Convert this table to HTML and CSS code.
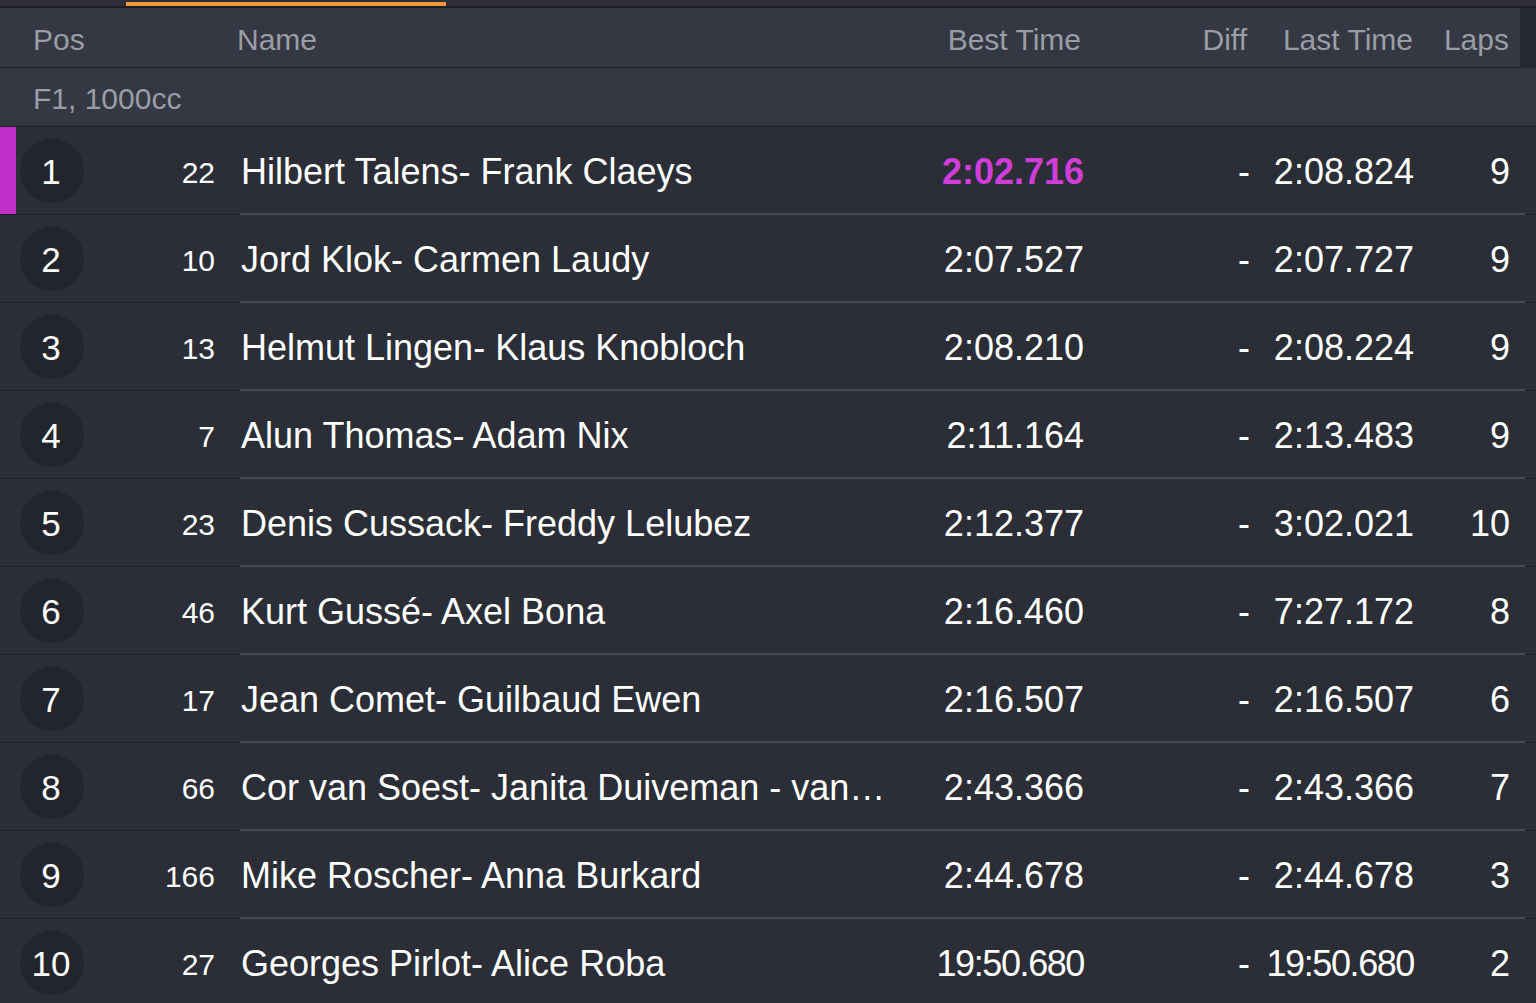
FILE: index.html
```html
<!DOCTYPE html>
<html>
<head>
<meta charset="utf-8">
<link rel="stylesheet" href="styles.css">
</head>
<body>
<div class="page">
  <div class="topbar"><div class="tab-ind"></div></div>
  <div class="head-wrap">
    <div class="head">
      <div class="h-lead">Pos</div>
      <div class="h-name">Name</div>
      <div class="h-best">Best Time</div>
      <div class="h-diff">Diff</div>
      <div class="h-last">Last Time</div>
      <div class="h-laps">Laps</div>
    </div>
    <div class="head-tail"></div>
  </div>
  <div class="group">F1, 1000cc</div>

  <div class="row leader">
    <div class="lead"><div class="stripe"></div><div class="pos">1</div><div class="num">22</div></div>
    <div class="main"><div class="name">Hilbert Talens- Frank Claeys</div><div class="best fastest">2:02.716</div><div class="diff">-</div><div class="last">2:08.824</div><div class="laps">9</div></div>
    <div class="tail"></div>
  </div>
  <div class="row">
    <div class="lead"><div class="stripe none"></div><div class="pos">2</div><div class="num">10</div></div>
    <div class="main"><div class="name">Jord Klok- Carmen Laudy</div><div class="best">2:07.527</div><div class="diff">-</div><div class="last">2:07.727</div><div class="laps">9</div></div>
    <div class="tail"></div>
  </div>
  <div class="row">
    <div class="lead"><div class="stripe none"></div><div class="pos">3</div><div class="num">13</div></div>
    <div class="main"><div class="name">Helmut Lingen- Klaus Knobloch</div><div class="best">2:08.210</div><div class="diff">-</div><div class="last">2:08.224</div><div class="laps">9</div></div>
    <div class="tail"></div>
  </div>
  <div class="row">
    <div class="lead"><div class="stripe none"></div><div class="pos">4</div><div class="num">7</div></div>
    <div class="main"><div class="name">Alun Thomas- Adam Nix</div><div class="best">2:11.164</div><div class="diff">-</div><div class="last">2:13.483</div><div class="laps">9</div></div>
    <div class="tail"></div>
  </div>
  <div class="row">
    <div class="lead"><div class="stripe none"></div><div class="pos">5</div><div class="num">23</div></div>
    <div class="main"><div class="name">Denis Cussack- Freddy Lelubez</div><div class="best">2:12.377</div><div class="diff">-</div><div class="last">3:02.021</div><div class="laps">10</div></div>
    <div class="tail"></div>
  </div>
  <div class="row">
    <div class="lead"><div class="stripe none"></div><div class="pos">6</div><div class="num">46</div></div>
    <div class="main"><div class="name">Kurt Gussé- Axel Bona</div><div class="best">2:16.460</div><div class="diff">-</div><div class="last">7:27.172</div><div class="laps">8</div></div>
    <div class="tail"></div>
  </div>
  <div class="row">
    <div class="lead"><div class="stripe none"></div><div class="pos">7</div><div class="num">17</div></div>
    <div class="main"><div class="name">Jean Comet- Guilbaud Ewen</div><div class="best">2:16.507</div><div class="diff">-</div><div class="last">2:16.507</div><div class="laps">6</div></div>
    <div class="tail"></div>
  </div>
  <div class="row">
    <div class="lead"><div class="stripe none"></div><div class="pos">8</div><div class="num">66</div></div>
    <div class="main"><div class="name">Cor van Soest- Janita Duiveman - van…</div><div class="best">2:43.366</div><div class="diff">-</div><div class="last">2:43.366</div><div class="laps">7</div></div>
    <div class="tail"></div>
  </div>
  <div class="row">
    <div class="lead"><div class="stripe none"></div><div class="pos">9</div><div class="num">166</div></div>
    <div class="main"><div class="name">Mike Roscher- Anna Burkard</div><div class="best">2:44.678</div><div class="diff">-</div><div class="last">2:44.678</div><div class="laps">3</div></div>
    <div class="tail"></div>
  </div>
  <div class="row">
    <div class="lead"><div class="stripe none"></div><div class="pos">10</div><div class="num">27</div></div>
    <div class="main"><div class="name">Georges Pirlot- Alice Roba</div><div class="best tight">19:50.680</div><div class="diff">-</div><div class="last tight">19:50.680</div><div class="laps">2</div></div>
    <div class="tail"></div>
  </div>
</div>
</body>
</html>
```
FILE: styles.css
```css
* { box-sizing: border-box; }
html, body { margin: 0; padding: 0; }
body {
  background: #2b2e36;
  font-family: "Liberation Sans", Arial, sans-serif;
  color: #ffffff;
  overflow: hidden;
}
.page { width: 1536px; height: 1003px; overflow: hidden; }

.topbar {
  height: 8px;
  background: #2b2e36;
  border-bottom: 2px solid #1d1f24;
  display: flex;
  align-items: flex-end;
}
.tab-ind {
  margin-left: 126px;
  width: 320px;
  height: 4px;
  background: #ee9a3c;
}

.head-wrap { display: flex; height: 60px; background: #262930; }
.head {
  width: 1520px;
  display: flex;
  align-items: center;
  background: #353842;
  border-bottom: 1px solid #1d1f24;
  color: #9a9da6;
  font-size: 30px;
  padding-top: 5px;
}
.head-tail { flex: 1; }
.h-lead { width: 237px; padding-left: 33px; }
.h-name { width: 653px; }
.h-best { width: 191px; text-align: right; }
.h-diff { width: 166px; text-align: right; }
.h-last { width: 166px; text-align: right; }
.h-laps { width: 96px; text-align: right; }

.group {
  height: 59px;
  background: #353842;
  border-bottom: 1px solid #1d1f24;
  color: #9a9da6;
  font-size: 30px;
  padding-left: 33px;
  display: flex;
  align-items: center;
  padding-top: 4px;
}

.row { display: flex; height: 88px; }
.lead {
  width: 240px;
  display: flex;
  align-items: center;
  border-bottom: 1px solid #1f2227;
}
.stripe { width: 16px; align-self: stretch; background: #c12ec8; }
.stripe.none { background: transparent; }
.pos {
  width: 64px;
  height: 64px;
  margin-left: 4px;
  border-radius: 50%;
  background: #22252b;
  display: flex;
  align-items: center;
  justify-content: center;
  font-size: 35px;
  padding-top: 3px;
  padding-right: 2px;
}
.num {
  flex: 1;
  text-align: right;
  padding-right: 25px;
  font-size: 30px;
  padding-top: 4px;
}
.main {
  width: 1285px;
  display: flex;
  align-items: center;
  border-bottom: 2px solid #474a52;
  font-size: 36px;
  padding-top: 3px;
}
.tail { flex: 1; border-bottom: 1px solid #1f2227; }
.name {
  width: 650px;
  padding-left: 1px;
  padding-right: 4px;
  white-space: nowrap;
  overflow: hidden;
  text-overflow: ellipsis;
}
.best { width: 194px; text-align: right; }
.best.fastest { color: #d03dd8; font-weight: bold; }
.diff { width: 166px; text-align: right; }
.last { width: 164px; text-align: right; }
.laps { width: 96px; text-align: right; }
.tight { letter-spacing: -1.4px; }
```
